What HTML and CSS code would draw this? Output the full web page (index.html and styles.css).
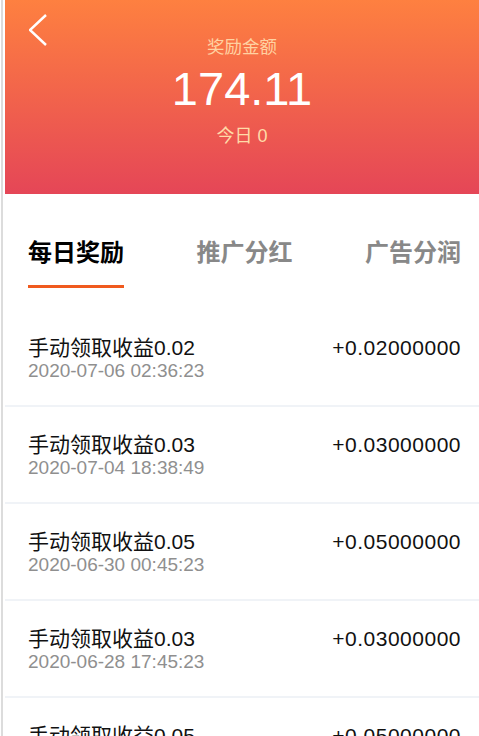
FILE: index.html
```html
<!DOCTYPE html>
<html lang="zh-CN">
<head>
<meta charset="utf-8">
<title>奖励金额</title>
<link rel="stylesheet" href="styles.css">
</head>
<body>
<div class="page">
	<div class="header">
		<a class="back" href="#">
			<svg width="20" height="34" viewBox="0 0 20 34"><polyline points="17,1 1,16 17,31" fill="none" stroke="#fff" stroke-width="2.4"/></svg>
		</a>
		<div class="label">奖励金额</div>
		<div class="total">174.11</div>
		<div class="today">今日 0</div>
	</div>

	<div class="tabs">
		<div class="tab active">每日奖励</div>
		<div class="tab">推广分红</div>
		<div class="tab">广告分润</div>
	</div>

	<div class="list">
		<div class="row">
			<div class="info">
				<div class="title">手动领取收益0.02</div>
				<div class="date">2020-07-06 02:36:23</div>
			</div>
			<div class="amount">+0.02000000</div>
		</div>
		<div class="row">
			<div class="info">
				<div class="title">手动领取收益0.03</div>
				<div class="date">2020-07-04 18:38:49</div>
			</div>
			<div class="amount">+0.03000000</div>
		</div>
		<div class="row">
			<div class="info">
				<div class="title">手动领取收益0.05</div>
				<div class="date">2020-06-30 00:45:23</div>
			</div>
			<div class="amount">+0.05000000</div>
		</div>
		<div class="row">
			<div class="info">
				<div class="title">手动领取收益0.03</div>
				<div class="date">2020-06-28 17:45:23</div>
			</div>
			<div class="amount">+0.03000000</div>
		</div>
		<div class="row">
			<div class="info">
				<div class="title">手动领取收益0.05</div>
				<div class="date">2020-06-26 12:05:23</div>
			</div>
			<div class="amount">+0.05000000</div>
		</div>
	</div>
</div>
</body>
</html>
```

FILE: styles.css
```css
html, body {
margin:0;
padding:0;
background:#FFFFFF;
}
body {
padding-left:1px;
font-family:"Liberation Sans","Noto Sans CJK SC",sans-serif;
color:#111111;
overflow:hidden;
}
.page {
border-left:2px solid #DCDCDC;
padding-left:2px;
min-height:736px;
}
.header {
position:relative;
height:194px;
box-sizing:border-box;
padding-top:35px;
background:linear-gradient(#FE8040, #E54657);
text-align:center;
}
.back {
position:absolute;
left:24px;
top:14px;
display:block;
width:20px;
height:34px;
}
.label {
font-size:17.5px;
line-height:24px;
color:#FFD2A2;
}
.total {
margin-top:6px;
font-size:47px;
line-height:47px;
color:#FFFFFF;
}
.today {
margin-top:12px;
font-size:18px;
line-height:24px;
color:#FFDBA8;
}
.tabs {
display:flex;
justify-content:space-between;
padding:41px 18px 0 23px;
height:116px;
box-sizing:border-box;
}
.tab {
font-size:24px;
font-weight:bold;
line-height:36px;
color:#888888;
height:53px;
box-sizing:border-box;
}
.tab.active {
color:#000000;
border-bottom:3px solid #F05A1E;
}
.row {
display:flex;
justify-content:space-between;
align-items:flex-start;
padding:26px 18px 23px 23px;
border-bottom:2px solid #F0F3F7;
}
.title {
font-size:21px;
line-height:24px;
color:#111111;
}
.date {
font-size:19px;
line-height:22px;
color:#8F8F8F;
}
.amount {
font-size:21px;
line-height:24px;
letter-spacing:0.5px;
color:#111111;
}
```
